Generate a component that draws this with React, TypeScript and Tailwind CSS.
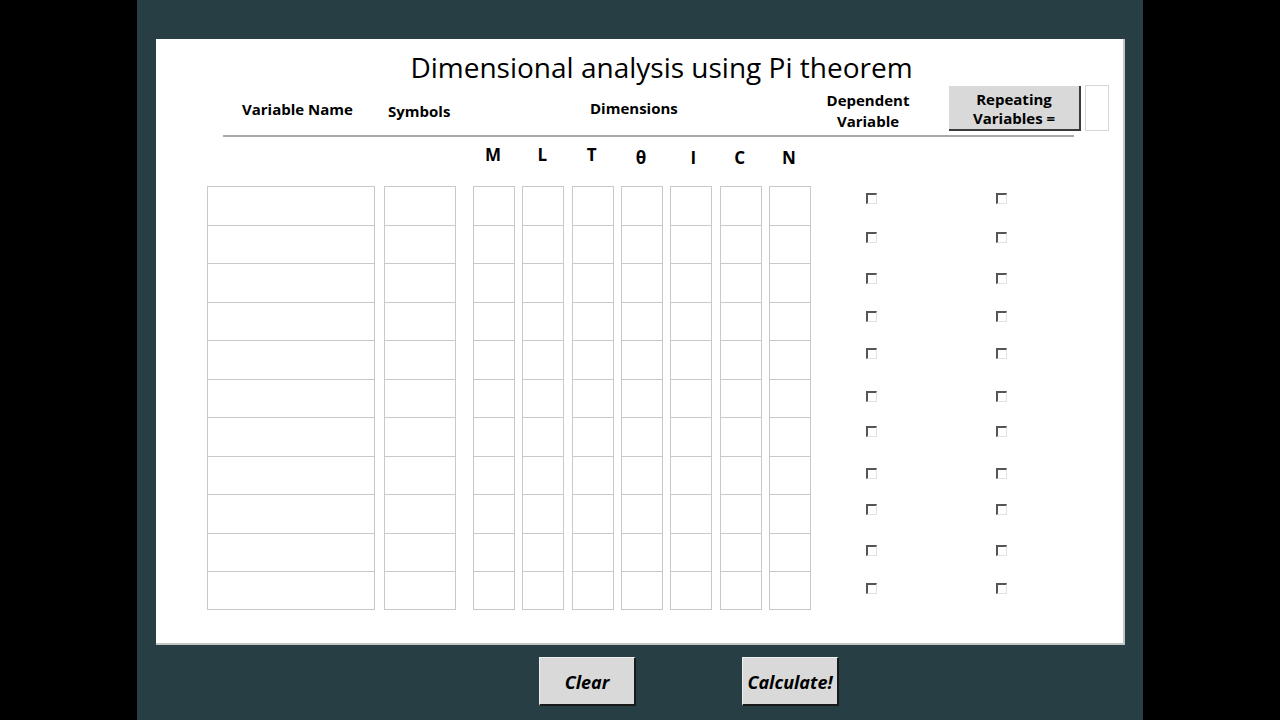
import React from "react";

const rows = Array.from({ length: 11 }, (_, i) => i);
const dimCols = ["M", "L", "T", "θ", "I", "C", "N"];
const cbOffsets = [
  "mt-[7px]",
  "mt-[7px]",
  "mt-[10px]",
  "mt-[9px]",
  "mt-[8px]",
  "mt-[12px]",
  "mt-[9px]",
  "mt-[12px]",
  "mt-[10px]",
  "mt-[12px]",
  "mt-[12px]",
];
const letterPad = ["pt-[0px]", "pt-[0px]", "pt-[0px]", "pt-[3px]", "pt-[3px]", "pt-[3px]", "pt-[3px]"];
const letterShift = ["", "", "", "", "pl-[6px]", "", ""];

function Column({ w }: { w: string }) {
  return (
    <div className={`flex flex-col ${w}`}>
      {rows.map((r) => (
        <div
          key={r}
          className={`h-[38.5px] border-x border-t border-[#c9c9c9] bg-white ${r === 10 ? "border-b" : ""}`}
        />
      ))}
    </div>
  );
}

function Check() {
  return (
    <div className="w-[11px] h-[11px] border-t-2 border-l-2 border-t-[#555] border-l-[#555] border-r border-b border-r-[#e2e2e2] border-b-[#e2e2e2] bg-white" />
  );
}

function CheckCol({ ml }: { ml: string }) {
  return (
    <div className={`flex flex-col ${ml}`}>
      {rows.map((r) => (
        <div key={r} className="h-[38.5px]">
          <div className={cbOffsets[r]}>
            <Check />
          </div>
        </div>
      ))}
    </div>
  );
}

export default function App() {
  return (
    <div
      className="w-[1280px] h-[720px] bg-black flex justify-center"
      style={{ fontFamily: '"Open Sans", "Noto Sans", sans-serif' }}
    >
      <div className="w-[1006px] h-[720px] bg-[#273e44] pt-[39px] pl-[19px]">
        <div className="w-[969px] h-[606px] bg-white border-r-2 border-b-2 border-[#c4c4c4] relative">
          <div className="text-center text-[28px] text-black pt-[9px] leading-[38px] pl-[44px]">
            Dimensional analysis using Pi theorem
          </div>
          {/* header row */}
          <div className="flex h-[49px]">
            <div className="w-[86px]" />
            <div className="text-[15px] leading-[20px] font-bold w-[146px] pt-[13px] text-black">Variable Name</div>
            <div className="text-[15px] leading-[20px] font-bold w-[202px] pt-[15px] text-black">Symbols</div>
            <div className="text-[15px] leading-[20px] font-bold w-[217px] pt-[12px] text-black">Dimensions</div>
            <div className="text-[15px] font-bold w-[122px] text-center leading-[21px] pt-[4px] text-black">
              Dependent
              <br />
              Variable
            </div>
            <div className="w-[132px] h-[45px] bg-[#d9d9d9] border-r-2 border-b-2 border-r-[#3a3a3a] border-b-[#3a3a3a] text-[15px] font-bold text-center leading-[19px] pt-[4px] text-black ml-[20px]">
              Repeating
              <br />
              Variables =
            </div>
            <div className="w-[24px] h-[46px] border border-[#d6d6d6] ml-[4px] -mt-[1px]" />
          </div>
          <div className="ml-[67px] w-[851px] h-[2px] bg-[#a9a9a9]" />
          {/* dimension letters */}
          <div className="flex mt-[7px] h-[34px] text-[17px] leading-[22px] font-bold text-black">
            <div className="w-[316px]" />
            <div className="flex gap-[7.33px]">
              {dimCols.map((d, i) => (
                <div key={d} className={`w-[42px] text-center ${letterPad[i]} ${letterShift[i]}`}>
                  {d}
                </div>
              ))}
            </div>
          </div>
          {/* grid */}
          <div className="flex mt-[8px] ml-[51px]">
            <Column w="w-[168px]" />
            <div className="w-[9px]" />
            <Column w="w-[72px]" />
            <div className="w-[17px]" />
            <div className="flex gap-[7.33px]">
              {dimCols.map((d) => (
                <Column key={d} w="w-[42px]" />
              ))}
            </div>
            <CheckCol ml="ml-[55px]" />
            <CheckCol ml="ml-[119px]" />
          </div>
        </div>
        {/* buttons */}
        <div className="flex mt-[12px] ml-[383px] gap-[106px]">
          <button className="w-[97px] h-[49px] pt-[3px] bg-[#d9d9d9] border-r-2 border-b-2 border-r-[#1a1a1a] border-b-[#1a1a1a] border-t border-l border-t-[#efefef] border-l-[#efefef] text-[18px] font-bold italic text-black">
            Clear
          </button>
          <button className="w-[97px] h-[49px] pt-[3px] bg-[#d9d9d9] border-r-2 border-b-2 border-r-[#1a1a1a] border-b-[#1a1a1a] border-t border-l border-t-[#efefef] border-l-[#efefef] text-[18px] font-bold italic text-black">
            Calculate!
          </button>
        </div>
      </div>
    </div>
  );
}
